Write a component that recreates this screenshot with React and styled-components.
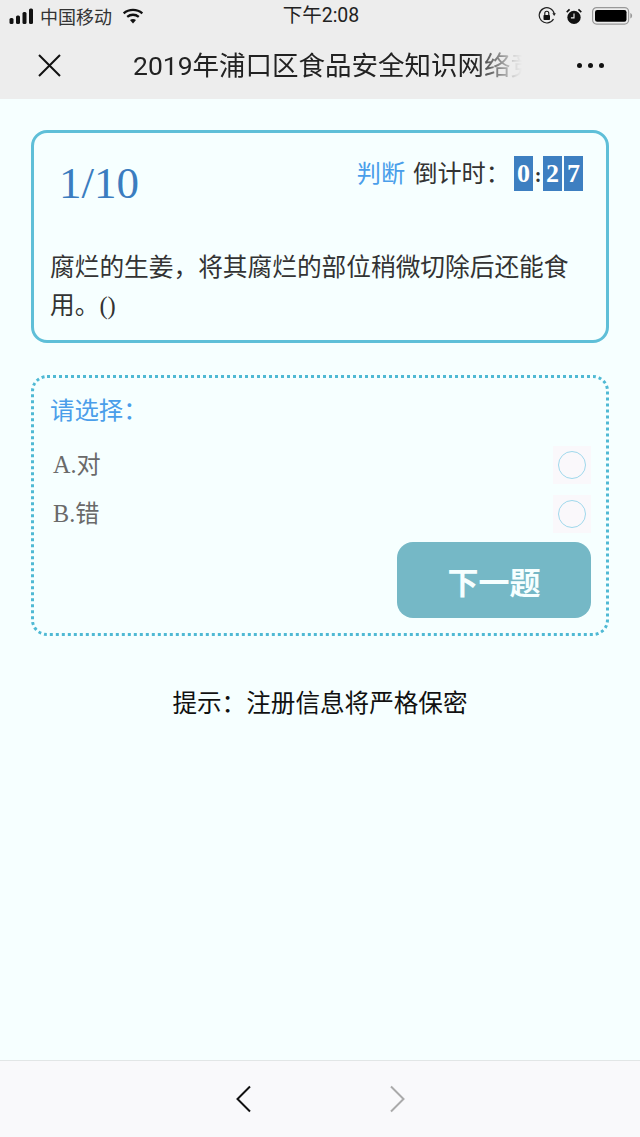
import React from 'react'
import styled, { createGlobalStyle } from 'styled-components'

const Global = createGlobalStyle`
  html, body {
    margin: 0;
    padding: 0;
    background: #f6ffff;
  }
  * { box-sizing: border-box; }
`

const cjk = `"Noto Sans CJK SC", sans-serif`
const serif = `"Liberation Serif", "Noto Sans CJK SC", serif`

const Page = styled.div`
  width: 640px;
  height: 1137px;
  display: flex;
  flex-direction: column;
  background: #f6ffff;
  overflow: hidden;
`

const TopArea = styled.header`
  height: 99px;
  background: #ededed;
  flex-shrink: 0;
`

const StatusBar = styled.div`
  height: 32px;
  display: grid;
  grid-template-columns: 1fr auto 1fr;
  align-items: center;
  padding: 0 7px 0 9px;
  color: #222;
`

const StatusLeft = styled.div`
  display: flex;
  align-items: center;
  gap: 5px;
`

const StatusRight = styled.div`
  display: flex;
  align-items: center;
  justify-content: flex-end;
  gap: 10px;
`

const Carrier = styled.span`
  font: 400 18px/1 ${cjk};
  color: #333;
`

const Clock = styled.span`
  font: 400 19.5px/1 Roboto, ${cjk};
  color: #222;
`

const NavBar = styled.div`
  height: 67px;
  display: flex;
  align-items: center;
  padding: 0 36px 0 37px;
`

const Title = styled.div`
  width: 392px;
  margin-left: 71px;
  white-space: nowrap;
  overflow: hidden;
  font: 400 26.5px/36px Roboto, ${cjk};
  color: #222;
  -webkit-mask-image: linear-gradient(to right, #000 340px, rgba(0, 0, 0, 0.45) 368px, rgba(0, 0, 0, 0.1) 382px, transparent 389px);
  mask-image: linear-gradient(to right, #000 340px, rgba(0, 0, 0, 0.45) 368px, rgba(0, 0, 0, 0.1) 382px, transparent 389px);
`

const More = styled.div`
  margin-left: auto;
  display: flex;
  gap: 6px;
`

const Dot = styled.i`
  width: 5px;
  height: 5px;
  border-radius: 50%;
  background: #111;
`

const Main = styled.main`
  flex: 1;
  padding: 31px 31px 0;
  font-family: ${serif};
`

const QuestionCard = styled.section`
  height: 213px;
  border: 3px solid #5fbfd8;
  border-radius: 16px;
  padding: 0 23px 0 16px;
  display: flex;
  flex-direction: column;
`

const CardHead = styled.div`
  display: flex;
  justify-content: space-between;
  height: 116px;
`

const Progress = styled.div`
  font: 400 45px/1 ${serif};
  color: #3b7dc0;
  margin: 28px 0 0 9px;
`

const TimerRow = styled.div`
  display: flex;
  align-items: flex-start;
  padding-top: 23px;
  font: 400 24.2px/31px ${cjk};
  color: #333;
`

const TypeTag = styled.span`
  color: #4a9eea;
  margin-right: 8px;
`

const Chip = styled.span`
  width: 19px;
  height: 35px;
  margin-left: ${p => p.$gap || 0}px;
  background: #3d7fc1;
  color: #fff;
  font: 700 26px/35px ${serif};
  text-align: center;
`

const Colon = styled.span`
  width: 10px;
  text-align: center;
  font: 700 20px/38px ${serif};
  color: #333;
`

const QuestionText = styled.p`
  margin: 0;
  font: 400 24.7px/38px ${serif};
  color: #333;
`

const AnswerCard = styled.section`
  height: 261px;
  margin-top: 32px;
  border: 3px dotted #4fb9d4;
  border-radius: 16px;
  padding: 16px 15px 0 16px;
`

const Prompt = styled.div`
  font: 400 24.4px/34px ${serif};
  color: #4a9eea;
`

const OptionList = styled.div`
  margin-top: 12px;
`

const OptionRow = styled.label`
  display: flex;
  align-items: center;
  justify-content: space-between;
  height: 49px;
  padding-left: 3px;
  font: 400 24.2px/38px ${serif};
  color: #6a6a6a;
`

const RadioBox = styled.span`
  width: 38px;
  height: 38px;
  background: #faf8fb;
  display: flex;
  align-items: center;
  justify-content: center;
`

const RadioCircle = styled.span`
  width: 28px;
  height: 28px;
  border-radius: 50%;
  border: 1px solid #9fd8ec;
`

const NextRow = styled.div`
  display: flex;
  justify-content: flex-end;
  margin-top: 4px;
`

const NextButton = styled.button`
  width: 194px;
  height: 76px;
  border: 0;
  border-radius: 16px;
  background: #75b8c6;
  color: #f6ffff;
  font: 700 31px/1 ${cjk};
`

const Tip = styled.p`
  margin: 47px 0 0;
  text-align: center;
  font: 400 24.6px/36px ${cjk};
  color: #111;
`

const BottomBar = styled.footer`
  height: 77px;
  flex-shrink: 0;
  background: #f9f9fb;
  border-top: 1px solid #e2e6e6;
  display: flex;
  align-items: center;
  justify-content: center;
  gap: 137px;
`

const Chevron = ({ dir, color }) => (
  <svg width="16" height="28" viewBox="0 0 16 28" fill="none">
    <path d={dir === 'left' ? 'M14 1.5 1.5 14 14 26.5' : 'M2 1.5 14.5 14 2 26.5'} stroke={color} strokeWidth="2" />
  </svg>
)

const App = () => (
  <Page>
    <Global />
    <TopArea>
      <StatusBar>
        <StatusLeft>
          <svg width="26" height="16" viewBox="0 0 26 16" fill="#111">
            <rect x="0.5" y="10" width="4" height="6" rx="1.5" />
            <rect x="7" y="7.5" width="4" height="8.5" rx="1.5" />
            <rect x="13.5" y="4" width="4" height="12" rx="1.5" />
            <rect x="20" y="0.5" width="4" height="15.5" rx="1.5" />
          </svg>
          <Carrier>中国移动</Carrier>
          <svg width="22" height="16" viewBox="0 0 24 18" style={{ marginLeft: 5 }} fill="none" stroke="#111" strokeWidth="2.6">
            <path d="M1.5 6C7.5.8 16.5.8 22.5 6" />
            <path d="M5.5 10c3.8-3.2 9.2-3.2 13 0" />
            <path d="M12 17.5 8.6 13.4c2-1.5 4.8-1.5 6.8 0z" fill="#111" stroke="none" />
          </svg>
        </StatusLeft>
        <Clock>下午2:08</Clock>
        <StatusRight>
          <svg width="18" height="18" viewBox="0 0 18 18" fill="none">
            <path d="M15.5 12A7.6 7.6 0 1 1 16.3 7" stroke="#222" strokeWidth="1.2" />
            <path d="M14.3 6.2h3.6L16.2 9z" fill="#222" />
            <rect x="5.5" y="8" width="6.5" height="5" rx="0.8" fill="#111" />
            <path d="M6.8 8V6.3a2 2 0 0 1 4 0V8" stroke="#111" strokeWidth="1.1" />
          </svg>
          <svg width="16" height="17" viewBox="0 0 18 18">
            <circle cx="9" cy="10" r="7.5" fill="#111" />
            <path d="M9 5.5V10.5H5.5" stroke="#ededed" strokeWidth="1.3" fill="none" />
            <path d="M.8 4 4 1M17.2 4 14 1" stroke="#111" strokeWidth="1.8" />
          </svg>
          <svg width="41" height="18" viewBox="0 0 41 18">
            <rect x="0.6" y="0.6" width="36" height="16.5" rx="4" fill="none" stroke="#999" strokeWidth="1.2" />
            <rect x="3" y="3" width="31.5" height="11.7" rx="2.2" fill="#000" />
            <path d="M38.3 6v5.5c1.2-.4 1.8-1.5 1.8-2.7S39.5 6.4 38.3 6z" fill="#999" />
          </svg>
        </StatusRight>
      </StatusBar>
      <NavBar>
        <svg width="25" height="25" viewBox="0 0 25 25" stroke="#111" strokeWidth="2">
          <path d="M2 2 23 23M23 2 2 23" />
        </svg>
        <Title>2019年浦口区食品安全知识网络竞赛</Title>
        <More>
          <Dot />
          <Dot />
          <Dot />
        </More>
      </NavBar>
    </TopArea>
    <Main>
      <QuestionCard>
        <CardHead>
          <Progress>1/10</Progress>
          <TimerRow>
            <TypeTag>判断</TypeTag>
            <span>倒计时：</span>
            <Chip $gap={4}>0</Chip>
            <Colon>:</Colon>
            <Chip>2</Chip>
            <Chip $gap={2}>7</Chip>
          </TimerRow>
        </CardHead>
        <QuestionText>腐烂的生姜，将其腐烂的部位稍微切除后还能食用。()</QuestionText>
      </QuestionCard>
      <AnswerCard>
        <Prompt>请选择：</Prompt>
        <OptionList>
          <OptionRow>
            A.对
            <RadioBox><RadioCircle /></RadioBox>
          </OptionRow>
          <OptionRow>
            B.错
            <RadioBox><RadioCircle /></RadioBox>
          </OptionRow>
        </OptionList>
        <NextRow>
          <NextButton>下一题</NextButton>
        </NextRow>
      </AnswerCard>
      <Tip>提示：注册信息将严格保密</Tip>
    </Main>
    <BottomBar>
      <Chevron dir="left" color="#111" />
      <Chevron dir="right" color="#aaa" />
    </BottomBar>
  </Page>
)

export default App
